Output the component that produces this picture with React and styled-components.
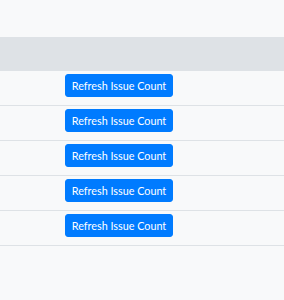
import React from "react";
import styled, { createGlobalStyle } from "styled-components";

const Global = createGlobalStyle`
  html, body { margin: 0; padding: 0; background: #f8f9fa; }
  body { font-family: Lato, "Liberation Sans", sans-serif; }
`;

const Page = styled.div`
  padding-top: 37px;
  width: 284px;
  height: 300px;
  box-sizing: border-box;
  background: #f8f9fa;
`;

const HeaderRow = styled.div`
  height: 34px;
  background: #dee2e6;
`;

const Row = styled.div`
  display: grid;
  grid-template-columns: 65px 1fr;
  height: 35px;
  box-sizing: border-box;
  padding-top: 3px;
  border-bottom: 1px solid #dee2e6;
`;

const Button = styled.button`
  grid-column: 2;
  justify-self: start;
  width: 108px;
  height: 23px;
  box-sizing: border-box;
  padding: 0;
  border: 1px solid #007bff;
  border-radius: 3px;
  background: #007bff;
  color: #fff;
  font-family: Lato, "Liberation Sans", sans-serif;
  font-size: 10.8px;
  line-height: 21px;
  text-align: center;
  white-space: nowrap;
  cursor: pointer;
`;

export default function App() {
  const rows = [1, 2, 3, 4, 5];
  return (
    <Page>
      <Global />
      <HeaderRow />
      {rows.map((r) => (
        <Row key={r}>
          <Button>Refresh Issue Count</Button>
        </Row>
      ))}
    </Page>
  );
}
